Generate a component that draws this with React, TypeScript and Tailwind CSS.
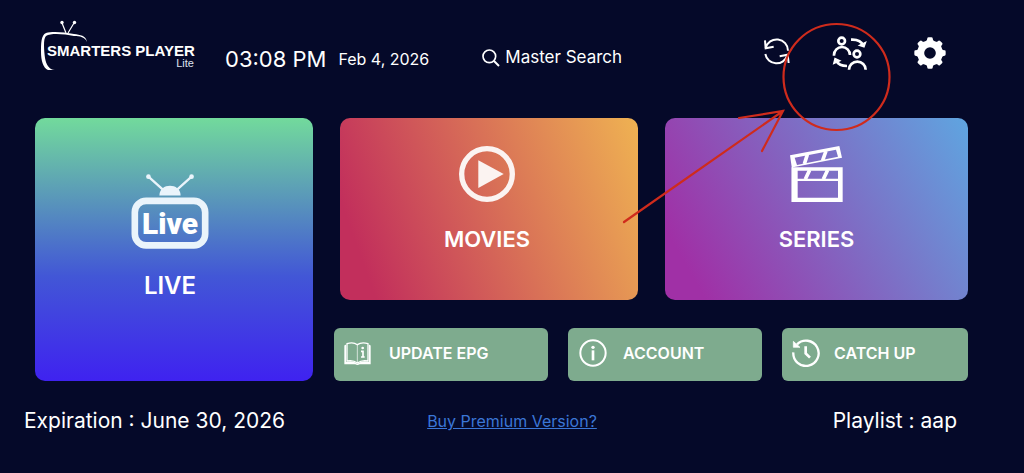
import type { ReactNode } from 'react';

function Logo() {
  return (
    <svg viewBox="0 0 155 50" className="w-[155px] h-[50px] shrink-0" role="img" aria-label="Smarters Player Lite">
      <path
        d="M47 22 C46 15 40 15 34 14 C24 12 12 11 6 13 C1 15 1 24 1 32 C1 40 3 48 8 50 C10 51 13 51 15 50 C9 50 6 44 5 38 C4 30 3 19 6 16 C11 13 24 14 34 16 C40 16 45 17 47 22 Z"
        fill="#fff"
      />
      <path d="M22 3 L26 13 M34 3 L28 13" stroke="#fff" strokeWidth="1.2" />
      <circle cx="22" cy="2.5" r="1.7" fill="#fff" />
      <circle cx="34.500" cy="2.5" r="1.7" fill="#fff" />
      <text x="7" y="36" fill="#fff" className="font-['Liberation_Sans',sans-serif] text-[15px] font-bold">
        SMARTERS PLAYER
      </text>
      <text x="154" y="47" textAnchor="end" fill="#dfe3f0" className="font-['Liberation_Sans',sans-serif] text-[11px]">
        Lite
      </text>
    </svg>
  );
}

function SearchIcon() {
  return (
    <svg viewBox="0 0 54 54" className="w-[18px] h-[18px]" fill="none" stroke="currentColor">
      <circle cx="22" cy="22" r="19" strokeWidth="5" />
      <path d="M36 36 L51 51" strokeWidth="6" />
    </svg>
  );
}

function RefreshIcon() {
  return (
    <svg viewBox="0 0 81 81" className="w-[27px] h-[27px]" fill="none" stroke="currentColor" strokeWidth="6">
      <path d="M8 30 A34 34 0 0 1 75 38" />
      <path d="M6 7 L8 31 L32 26" />
      <path d="M7 48 A34 34 0 0 0 73 52" />
      <path d="M50 55 L74 50 L77 75" />
    </svg>
  );
}

function SwitchUserIcon() {
  return (
    <svg viewBox="0 0 105 108" className="w-[35px] h-[36px]" fill="none" stroke="currentColor" strokeWidth="8">
      <circle cx="29" cy="18" r="10" />
      <path d="M6 62 V60 A24 24 0 0 1 54 60" />
      <circle cx="75" cy="57" r="10" />
      <path d="M51 104 A25 24 0 0 1 101 104" />
      <path d="M57 14 C75 13 88 18 93 31" />
      <path d="M82 31 L96 36 L101 22 Z" fill="currentColor" strokeWidth="4" />
      <path d="M45 93 C29 93 17 86 12 76" />
      <path d="M5 86 L9 70 L24 77 Z" fill="currentColor" strokeWidth="4" />
    </svg>
  );
}

const teeth = [0, 45, 90, 135, 180, 225, 270, 315];

function GearIcon() {
  return (
    <svg viewBox="-48 -48 96 96" className="w-[32px] h-[32px]" fill="currentColor">
      <circle r="28" fill="none" stroke="currentColor" strokeWidth="21" />
      {teeth.map((angle) => (
        <path key={angle} d="M-13 -34 Q-8 -38 -8 -44 Q-8 -47 -4 -47 H4 Q8 -47 8 -44 Q8 -38 13 -34 Z" transform={`rotate(${angle})`} />
      ))}
    </svg>
  );
}

function LiveIcon() {
  return (
    <svg viewBox="0 0 232 226" className="w-[78px] h-[75px]">
      <g stroke="#eaf4fb" fill="none">
        <path d="M51 8 L98 50 M181 8 L134 50" strokeWidth="7" />
        <rect x="10" y="81" width="212" height="134" rx="34" strokeWidth="20" />
      </g>
      <g fill="#eaf4fb">
        <circle cx="51" cy="8" r="7" />
        <circle cx="181" cy="8" r="7" />
        <path d="M84 65 C84 26 148 26 148 65 Z" />
      </g>
      <text x="116" y="181" textAnchor="middle" fill="#fff" className="font-['Roboto',sans-serif] text-[90px] font-black">
        Live
      </text>
    </svg>
  );
}

function PlayIcon() {
  return (
    <svg viewBox="0 0 168 168" className="w-[56px] h-[56px]" fill="#fbf3f1">
      <circle cx="84" cy="84" r="76" fill="none" stroke="#fbf3f1" strokeWidth="16" />
      <path d="M58 43 L134 84 L58 126 Z" />
    </svg>
  );
}

function ClapperIcon() {
  return (
    <svg viewBox="0 0 159 168" className="w-[53px] h-[56px]" fill="none" stroke="#fff">
      <path fill="#fff" stroke="none" fillRule="evenodd" d="M0 28 L148 0 L156 35 L9 64 V168 H5 V62 Z M14 35 L21 57 L144 32 L138 11 Z" />
      <path d="M52 26 L43 54 M108 15 L98 43" strokeWidth="11" />
      <path fill="#fff" stroke="none" fillRule="evenodd" d="M5 64 H158 V168 H5 Z M23 74 V98 H144 V74 Z M23 105 V155 H144 V105 Z" />
      <path d="M59 72 L46 100 M113 72 L100 100" strokeWidth="11" />
    </svg>
  );
}

function GuideIcon() {
  return (
    <svg viewBox="0 0 81 69" className="w-[27px] h-[23px]">
      <path d="M1 12 Q1 8 6 8 V60 Q25 54 40 65 Q56 54 75 60 V8 Q80 8 80 12 V67 H47 Q40 71 34 67 H1 Z" fill="#fff" />
      <path d="M9 5 Q28 -1 40 8 Q53 -1 72 5 V57 Q54 53 40 63 Q27 53 9 57 Z" fill="none" stroke="#fff" strokeWidth="4" />
      <path d="M40 8 V63" stroke="#fff" strokeWidth="2" />
      <circle cx="56" cy="18" r="4" fill="#fff" />
      <path d="M51 28 H57 V45 M51 45 H62" fill="none" stroke="#fff" strokeWidth="5" />
    </svg>
  );
}

function InfoIcon() {
  return (
    <svg viewBox="0 0 84 84" className="w-[28px] h-[28px]" fill="none" stroke="#fff">
      <circle cx="42" cy="42" r="38" strokeWidth="6" />
      <circle cx="42" cy="25" r="5" fill="#fff" stroke="none" />
      <path d="M42 34 V64" strokeWidth="8" />
    </svg>
  );
}

function HistoryIcon() {
  return (
    <svg viewBox="0 0 84 84" className="w-[28px] h-[28px]" fill="none" stroke="#fff" strokeWidth="7">
      <path d="M4 40 A38 38 0 1 0 15 16" />
      <path d="M4 7 V25 H24 Z" fill="#fff" strokeWidth="2" />
      <path d="M41 22 V43 L54 56" strokeWidth="8" />
    </svg>
  );
}

function Tile({ label, icon, className }: { label: string; icon: ReactNode; className: string }) {
  return (
    <button
      type="button"
      className={`flex flex-col items-center gap-[23px] rounded-[10px] leading-7 font-semibold cursor-pointer ${className}`}
    >
      {icon}
      <span>{label}</span>
    </button>
  );
}

function Action({ label, icon, className }: { label: string; icon: ReactNode; className: string }) {
  return (
    <button
      type="button"
      className={`flex items-center h-[53px] pb-[3px] rounded-md bg-[#7eab8e] text-base font-semibold whitespace-nowrap cursor-pointer ${className}`}
    >
      {icon}
      <span>{label}</span>
    </button>
  );
}

// Red circle and arrow pointing out the switch-user button
function Callout() {
  return (
    <svg
      viewBox="0 0 275 205"
      className="absolute top-[20px] right-[129px] w-[275px] h-[205px] pointer-events-none"
      fill="none"
      stroke="#cf2b1c"
      strokeWidth="2.2"
      aria-hidden="true"
    >
      <circle cx="216.500" cy="57" r="53" />
      <path d="M4 202 L163 91 M119 98 L163 91 L142 131" strokeLinecap="round" />
    </svg>
  );
}

export default function App() {
  return (
    <div className="relative min-h-screen bg-[#050929] text-white font-['Inter',sans-serif]">
      <header className="flex items-start pt-5 pl-10 pr-[78px] h-[118px] whitespace-nowrap">
        <Logo />
        <div className="flex items-center h-10 mt-[19px] ml-[30px] gap-3">
          <span className="text-[22px]">03:08 PM</span>
          <span className="text-base">Feb 4, 2026</span>
        </div>
        <button type="button" className="flex items-center gap-[5px] h-10 mt-[18px] ml-[53px] text-[17px] cursor-pointer">
          <SearchIcon />
          Master Search
        </button>
        <nav className="flex items-center h-10 mt-[13px] ml-auto">
          <button type="button" aria-label="Refresh" className="mr-[42px] mb-1 cursor-pointer">
            <RefreshIcon />
          </button>
          <button type="button" aria-label="Switch user" className="mr-[47px] cursor-pointer">
            <SwitchUserIcon />
          </button>
          <button type="button" aria-label="Settings" className="cursor-pointer">
            <GearIcon />
          </button>
        </nav>
      </header>

      <main className="grid grid-cols-[278fr_634fr] gap-[21px] pl-[35px] pr-14">
        <Tile
          label="LIVE"
          icon={<LiveIcon />}
          className="pt-14 pr-2 text-2xl/7 bg-[linear-gradient(180deg,#72da9c_0%,#4257d6_60%,#3f22f0_100%)]"
        />
        <div className="flex flex-col gap-7">
          <div className="grid grid-cols-[298fr_303fr] gap-[27px] pl-[6px]">
            <Tile
              label="MOVIES"
              icon={<PlayIcon />}
              className="pt-7 pb-[47px] pr-1 text-[22px]/7 bg-[linear-gradient(70deg,#c22f5c_10%,#efb252_100%)]"
            />
            <Tile
              label="SERIES"
              icon={<ClapperIcon />}
              className="pt-7 pb-[47px] text-[22px]/7 bg-[linear-gradient(60deg,#a030a6_10%,#5fa5e0_100%)]"
            />
          </div>
          <div className="grid grid-cols-[214fr_194fr_186fr] gap-5">
            <Action label="UPDATE EPG" icon={<GuideIcon />} className="pl-[10px] gap-[18px]" />
            <Action label="ACCOUNT" icon={<InfoIcon />} className="pl-[11px] gap-4" />
            <Action label="CATCH UP" icon={<HistoryIcon />} className="pl-[10px] gap-[14px]" />
          </div>
        </div>
      </main>

      <footer className="grid grid-cols-3 items-center pt-6 px-6 whitespace-nowrap text-[21px] leading-8">
        <span>Expiration : June 30, 2026</span>
        <a href="#premium" className="justify-self-center text-base text-[#3b76d6] underline">
          Buy Premium Version?
        </a>
        <span className="justify-self-end pr-[43px]">Playlist : aap</span>
      </footer>

      <Callout />
    </div>
  );
}
